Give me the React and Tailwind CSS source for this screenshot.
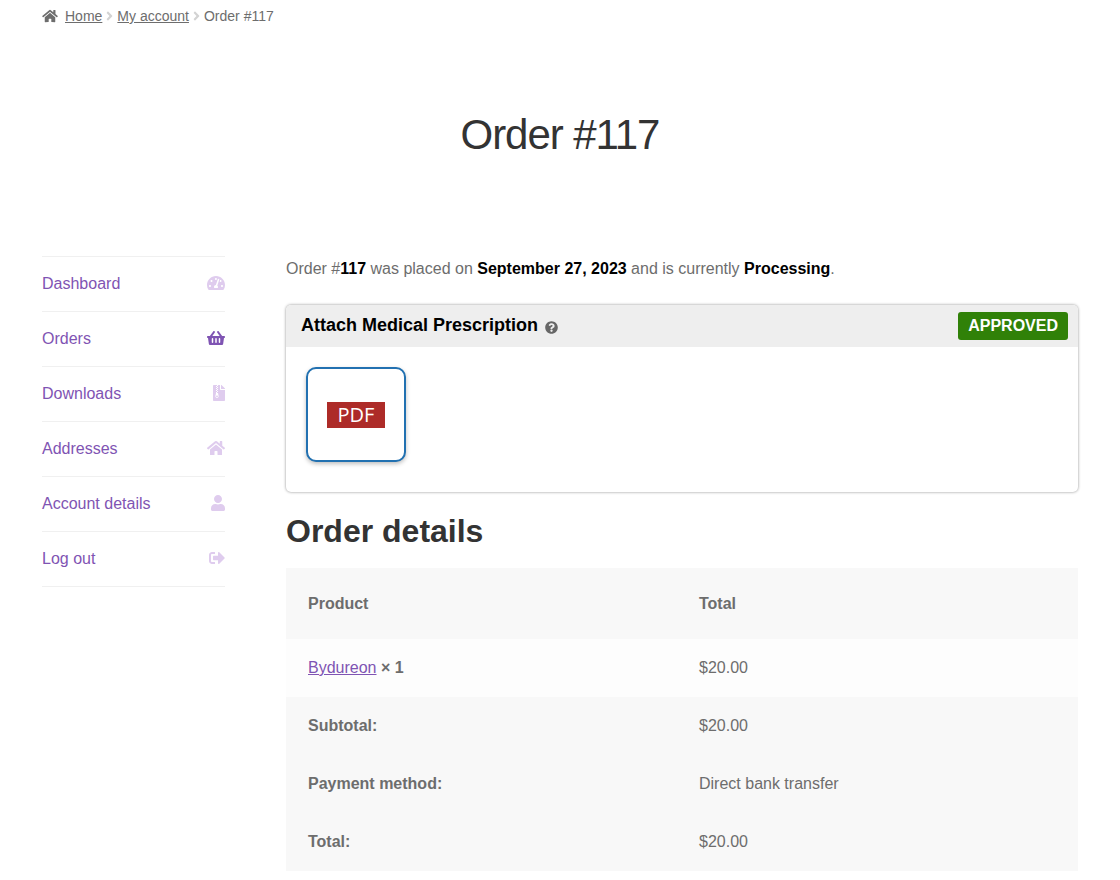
import {
  FaAngleRight,
  FaFileArchive,
  FaHome,
  FaQuestionCircle,
  FaShoppingBasket,
  FaSignOutAlt,
  FaTachometerAlt,
  FaUser,
} from 'react-icons/fa'

const menu = [
  { label: 'Dashboard', Icon: FaTachometerAlt, size: 'w-[18px]' },
  { label: 'Orders', Icon: FaShoppingBasket, size: 'w-[18px]', active: true },
  { label: 'Downloads', Icon: FaFileArchive, size: 'w-3' },
  { label: 'Addresses', Icon: FaHome, size: 'w-[18px]' },
  { label: 'Account details', Icon: FaUser, size: 'w-[14px]' },
  { label: 'Log out', Icon: FaSignOutAlt, size: 'w-4' },
]

const totals = [
  { label: 'Subtotal:', value: '$20.00' },
  { label: 'Payment method:', value: 'Direct bank transfer' },
  { label: 'Total:', value: '$20.00' },
]

function Breadcrumb() {
  return (
    <nav aria-label="Breadcrumb" className="flex items-center gap-1 pt-1 text-sm leading-6">
      <a href="#home" className="flex items-center gap-[7px]">
        <FaHome className="h-[14px] w-4" />
        <span className="underline">Home</span>
      </a>
      <FaAngleRight className="h-[14px] w-[7px] text-[#d3d3d3]" />
      <a href="#account" className="underline">My account</a>
      <FaAngleRight className="h-[14px] w-[7px] text-[#d3d3d3]" />
      <span>Order #117</span>
    </nav>
  )
}

function AccountMenu() {
  return (
    <nav aria-label="Account" className="w-[183px] shrink-0">
      <ul className="border-t border-[#f0f0f0]">
        {menu.map(({ label, Icon, size, active }) => (
          <li key={label} className="border-b border-[#f0f0f0]">
            <a href="#menu" className="flex h-[54px] items-center justify-between text-[#7f54b3]">
              {label}
              <Icon className={`mb-0.5 h-4 ${size} ${active ? '' : 'text-[#dfccee]'}`} />
            </a>
          </li>
        ))}
      </ul>
    </nav>
  )
}

function Prescription() {
  return (
    <section className="mt-[23px] overflow-hidden rounded-[5px] bg-white shadow-[0_0_3px_rgba(0,0,0,0.45)]">
      <header className="flex h-[42px] items-center justify-between bg-[#eee] pr-[10px] pl-[15px]">
        <h3 className="flex items-center gap-[7px] pb-0.5 text-lg leading-6 font-bold text-black">
          Attach Medical Prescription
          <FaQuestionCircle className="mt-1 size-[13px] text-[#666]" />
        </h3>
        <span className="rounded-[3px] bg-[#308108] px-[10px] leading-7 font-bold text-white">APPROVED</span>
      </header>
      <div className="px-5 pt-5 pb-[30px]">
        <button
          type="button"
          className="flex h-[95px] w-[100px] items-center justify-center rounded-[10px] border-2 border-[#2271b1] bg-white shadow-[0_2px_4px_rgba(0,0,0,0.25)]"
        >
          <span className="bg-[#ad2b28] px-[11px] font-['Open_Sans',sans-serif] text-xl leading-[26px] text-white">
            PDF
          </span>
        </button>
      </div>
    </section>
  )
}

function OrderTable() {
  return (
    <table className="mt-4 w-full table-fixed text-left">
      <thead className="bg-[#f8f8f8]">
        <tr className="h-[71px]">
          <th scope="col" className="w-[391px] px-[22px] font-bold">Product</th>
          <th scope="col" className="px-[22px] font-bold">Total</th>
        </tr>
      </thead>
      <tbody className="bg-[#fdfdfd]">
        <tr className="h-[58px]">
          <td className="px-[22px]">
            <a href="#product" className="text-[#7f54b3] underline">Bydureon</a>{' '}
            <strong>× 1</strong>
          </td>
          <td className="px-[22px]">$20.00</td>
        </tr>
      </tbody>
      <tfoot className="bg-[#f8f8f8]">
        {totals.map((row) => (
          <tr key={row.label} className="h-[58px]">
            <th scope="row" className="px-[22px] font-bold">{row.label}</th>
            <td className="px-[22px]">{row.value}</td>
          </tr>
        ))}
      </tfoot>
    </table>
  )
}

export default function App() {
  return (
    <div className="bg-white px-[42px] font-['Liberation_Sans',Arial,sans-serif] text-base text-[#6d6d6d]">
      <Breadcrumb />
      <h1 className="py-[82px] text-center text-[42px] leading-[50px] tracking-tight text-[#333]">
        Order #117
      </h1>
      <div className="flex gap-[61px] pt-[14px]">
        <AccountMenu />
        <main className="min-w-0 flex-1">
          <p className="leading-[26px]">
            Order #<b className="text-black">117</b> was placed on{' '}
            <b className="text-black">September 27, 2023</b> and is currently{' '}
            <b className="text-black">Processing</b>.
          </p>
          <Prescription />
          <h2 className="mt-[18px] text-[32px] leading-[42px] font-bold text-[#333]">Order details</h2>
          <OrderTable />
        </main>
      </div>
    </div>
  )
}
